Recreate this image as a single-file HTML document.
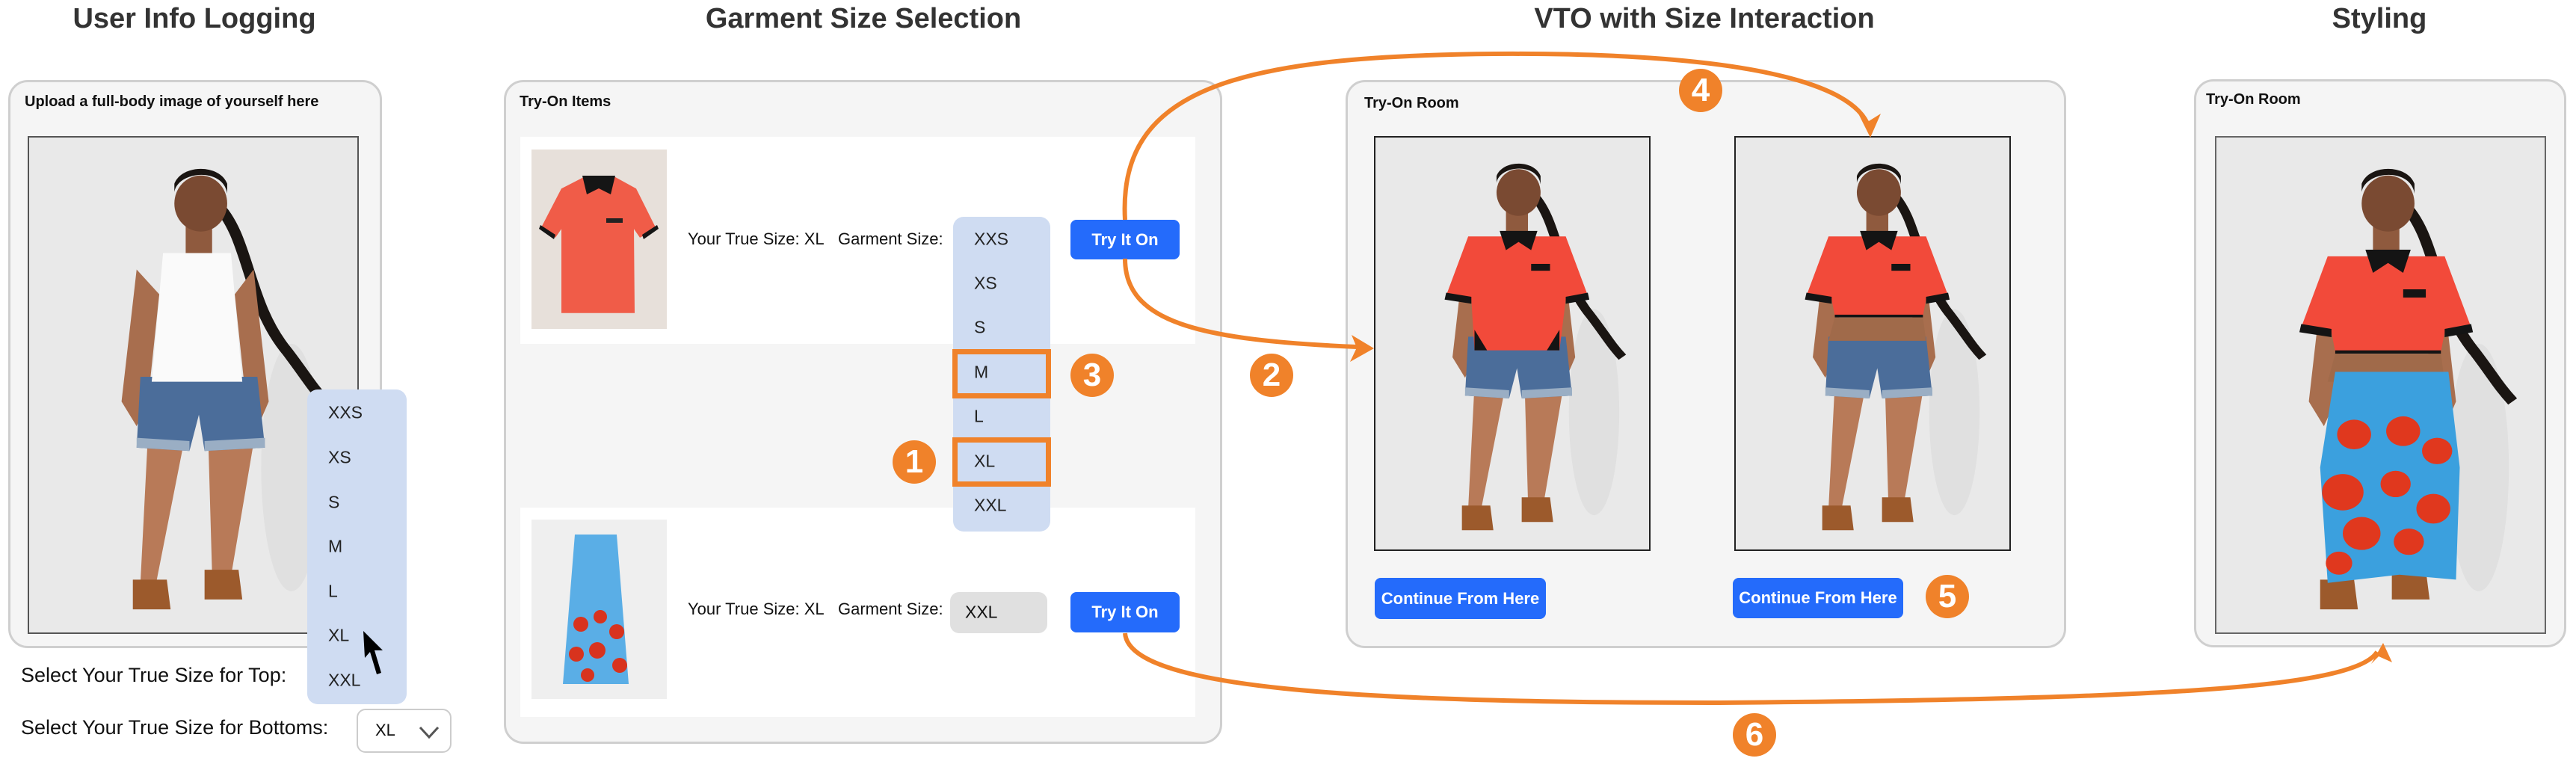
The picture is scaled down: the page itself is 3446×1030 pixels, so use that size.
<!DOCTYPE html>
<html><head><meta charset="utf-8">
<style>
*{margin:0;padding:0;box-sizing:border-box}
body{width:3446px;height:1030px;background:#fff;position:relative;overflow:hidden;font-family:"Liberation Sans",Arial,sans-serif;color:#111}
.abs{position:absolute}
.title{position:absolute;top:4px;font-size:38px;font-weight:bold;color:#333;white-space:nowrap;transform:translateX(-50%)}
.panel{position:absolute;background:#f5f5f5;border:3px solid #cfcfcf;border-radius:26px}
.ptitle{position:absolute;font-size:20px;font-weight:bold;white-space:nowrap}
.photo{position:absolute;background:#e9e9e9;border:2px solid #222;overflow:hidden}
.photo svg{width:100%;height:100%;display:block}
.dd{position:absolute;background:#cfdcf2;border-radius:14px}
.dd div{position:absolute;left:28px;font-size:23px;color:#222;transform:translateY(-50%)}
.btn{position:absolute;background:#246bfb;color:#fff;font-weight:bold;border-radius:8px;display:flex;align-items:center;justify-content:center;font-size:22px;white-space:nowrap}
.badge{position:absolute;width:58px;height:58px;border-radius:50%;background:#f0822a;color:#fff;font-weight:bold;font-size:44px;display:flex;align-items:center;justify-content:center;transform:translate(-50%,-50%)}
.lbl{position:absolute;font-size:27px;white-space:nowrap}
.row{position:absolute;background:#fff}
.txt{position:absolute;font-size:22px;white-space:nowrap;transform:translateY(-50%)}
.obox{position:absolute;border:7px solid #f0822a}
</style></head><body>
<svg width="0" height="0" style="position:absolute">
<defs>
<g id="base">
 <ellipse cx="152" cy="200" rx="16" ry="75" fill="#e0e0e0"/>
 <path d="M112 40 C130 60 128 100 150 130 C160 145 162 150 170 160" stroke="#1a1512" stroke-width="6" fill="none"/>
 <path d="M70 80 L62 160 L70 175 L76 160 L82 95 Z M132 80 L140 160 L134 176 L128 160 L122 95 Z" fill="#a86e4e"/>
 <path d="M76 180 L72 270 L80 272 L95 185 Z M108 185 L110 265 L120 266 L132 185 Z" fill="#b87a58"/>
 <rect x="96" y="52" width="14" height="22" fill="#8f5a3e"/>
 <ellipse cx="104" cy="40" rx="14" ry="17" fill="#7a4a32"/>
 <path d="M90 33 C92 20 116 18 118 34 L118 28 C114 16 94 16 90 28 Z" fill="#1a1512"/>
 <path d="M68 268 L68 286 L88 286 L86 268 Z M106 262 L106 280 L126 280 L124 262 Z" fill="#9c5a2c"/>
</g>
<g id="shorts"><path d="M72 145 L134 145 L138 188 L106 190 L103 168 L98 190 L70 188 Z" fill="#4b6d9a"/><path d="M70 182 L98 184 L98 190 L70 188 Z M106 184 L138 182 L138 188 L106 190Z" fill="#9aaec4"/></g>
<g id="polo"><path d="M72 72 L134 72 L148 115 L134 118 L130 155 L76 155 L74 118 L58 115 Z" fill="#f24a3a"/><path d="M92 68 L116 68 L112 82 L104 76 L96 82 Z" fill="#141414"/><path d="M58 113 L74 116 L74 121 L57 118Z M134 116 L148 113 L149 118 L134 121Z" fill="#141414"/><rect x="112" y="92" width="12" height="5" fill="#141414"/><path d="M76 140 L84 155 L76 155Z M130 140 L122 155 L130 155Z" fill="#141414"/></g>
<g id="crop"><path d="M72 72 L134 72 L148 115 L134 118 L132 130 L76 130 L74 118 L58 115 Z" fill="#f24a3a"/><path d="M92 68 L116 68 L112 82 L104 76 L96 82 Z" fill="#141414"/><path d="M58 113 L74 116 L74 121 L57 118Z M134 116 L148 113 L149 118 L134 121Z" fill="#141414"/><rect x="112" y="92" width="12" height="5" fill="#141414"/><rect x="76" y="129" width="56" height="2" fill="#141414"/><path d="M76 131 L132 131 L134 148 L72 148Z" fill="#a06a4a"/></g>
<g id="tank"><path d="M84 70 L120 70 L126 148 L78 148 Z" fill="#fafafa"/></g>
<g id="skirt"><path d="M76 142 L136 142 L142 200 L140 268 L110 265 L72 270 L68 200 Z" fill="#3ba0de"/>
<g fill="#e0381e"><circle cx="86" cy="180" r="9"/><circle cx="112" cy="178" r="9"/><circle cx="130" cy="190" r="8"/><circle cx="80" cy="215" r="11"/><circle cx="108" cy="210" r="8"/><circle cx="128" cy="225" r="9"/><circle cx="90" cy="240" r="10"/><circle cx="115" cy="245" r="8"/><circle cx="78" cy="258" r="7"/></g></g>
</defs></svg>

<div class="title" style="left:260px">User Info Logging</div>
<div class="title" style="left:1155px">Garment Size Selection</div>
<div class="title" style="left:2280px">VTO with Size Interaction</div>
<div class="title" style="left:3183px">Styling</div>

<!-- Panel 1 -->
<div class="panel" style="left:11px;top:107px;width:500px;height:760px"></div>
<div class="ptitle" style="left:33px;top:125px">Upload a full-body image of yourself here</div>
<div class="photo" style="left:37px;top:182px;width:443px;height:666px;border-color:#555"><svg viewBox="0 0 200 300" preserveAspectRatio="none"><g transform="translate(-15,0) scale(1.15,1)"><use href="#base"/><use href="#shorts"/><use href="#tank"/></g></svg></div>
<div class="dd" style="left:411px;top:521px;width:133px;height:421px">
 <div style="top:31px">XXS</div><div style="top:91px">XS</div><div style="top:151px">S</div><div style="top:210px">M</div><div style="top:270px">L</div><div style="top:329px">XL</div><div style="top:389px">XXL</div>
</div>
<svg class="abs" style="left:482px;top:842px" width="40" height="64" viewBox="0 0 40 64"><path d="M4 2 L6 38 L13 30 L22 60 L28 58 L19 28 L30 28 Z" fill="#000"/></svg>
<div class="lbl" style="left:28px;top:888px">Select Your True Size for Top:</div>
<div class="lbl" style="left:28px;top:958px">Select Your True Size for Bottoms:</div>
<div class="abs" style="left:477px;top:948px;width:127px;height:59px;border:2px solid #ccc;border-radius:12px;background:#fff"></div>
<div class="abs" style="left:502px;top:964px;font-size:22px">XL</div>
<svg class="abs" style="left:560px;top:970px" width="28" height="20"><path d="M2 3 L14 16 L26 3" stroke="#555" stroke-width="3" fill="none"/></svg>

<!-- Panel 2 -->
<div class="panel" style="left:674px;top:107px;width:961px;height:888px"></div>
<div class="ptitle" style="left:695px;top:125px">Try-On Items</div>
<div class="row" style="left:696px;top:183px;width:903px;height:277px"></div>
<div class="abs" style="left:711px;top:200px;width:181px;height:240px;background:#e7e0da"><svg width="181" height="240" viewBox="0 0 181 240"><path d="M70 38 L112 38 L140 55 L167 115 L145 128 L137 115 L138 240 L40 240 L40 115 L32 128 L12 115 L40 55 Z" transform="scale(1,0.9) translate(0,3)" fill="#f05c48"/><path d="M68 35 L112 35 L106 60 L90 52 L74 60 Z" fill="#151515"/><rect x="100" y="92" width="22" height="6" fill="#222"/><path d="M12 101 L32 114 L30 120 L10 106Z M168 101 L148 114 L150 120 L170 106Z" fill="#151515"/></svg></div>
<div class="txt" style="left:920px;top:320px">Your True Size: XL&nbsp;&nbsp; Garment Size:</div>
<div class="row" style="left:696px;top:679px;width:903px;height:280px"></div>
<div class="abs" style="left:711px;top:695px;width:181px;height:240px;background:#efefef"><svg width="181" height="240" viewBox="0 0 181 240"><path d="M58 20 L114 20 L130 220 L42 220 Z" fill="#5aaee6"/><g fill="#d8331e"><circle cx="66" cy="140" r="10"/><circle cx="92" cy="130" r="9"/><circle cx="114" cy="150" r="10"/><circle cx="60" cy="180" r="10"/><circle cx="88" cy="175" r="11"/><circle cx="118" cy="195" r="10"/><circle cx="75" cy="208" r="9"/></g></svg></div>
<div class="txt" style="left:920px;top:815px">Your True Size: XL&nbsp;&nbsp; Garment Size:</div>
<div class="abs" style="left:1271px;top:792px;width:130px;height:55px;background:#e0e0e0;border-radius:12px"></div>
<div class="txt" style="left:1291px;top:819px;font-size:23px">XXL</div>
<div class="dd" style="left:1275px;top:290px;width:130px;height:421px">
 <div style="top:30px">XXS</div><div style="top:89px">XS</div><div style="top:148px">S</div><div style="top:208px">M</div><div style="top:267px">L</div><div style="top:327px">XL</div><div style="top:386px">XXL</div>
</div>
<div class="obox" style="left:1274px;top:467px;width:132px;height:66px"></div>
<div class="obox" style="left:1274px;top:585px;width:132px;height:66px"></div>
<div class="btn" style="left:1432px;top:294px;width:146px;height:53px">Try It On</div>
<div class="btn" style="left:1432px;top:792px;width:146px;height:54px">Try It On</div>

<!-- Panel 3 -->
<div class="panel" style="left:1800px;top:107px;width:964px;height:760px"></div>
<div class="ptitle" style="left:1825px;top:127px">Try-On Room</div>
<div class="photo" style="left:1838px;top:182px;width:370px;height:555px"><svg viewBox="0 0 200 300" preserveAspectRatio="none"><g transform="translate(-15,0) scale(1.15,1)"><use href="#base"/><use href="#shorts"/><use href="#polo"/></g></svg></div>
<div class="photo" style="left:2320px;top:182px;width:370px;height:555px"><svg viewBox="0 0 200 300" preserveAspectRatio="none"><g transform="translate(-15,0) scale(1.15,1)"><use href="#base"/><use href="#shorts"/><use href="#crop"/></g></svg></div>
<div class="btn" style="left:1839px;top:773px;width:229px;height:55px">Continue From Here</div>
<div class="btn" style="left:2318px;top:773px;width:228px;height:54px">Continue From Here</div>

<!-- Panel 4 -->
<div class="panel" style="left:2935px;top:106px;width:498px;height:760px"></div>
<div class="ptitle" style="left:2951px;top:122px">Try-On Room</div>
<div class="photo" style="left:2963px;top:182px;width:443px;height:666px;border-color:#666"><svg viewBox="0 0 200 300" preserveAspectRatio="none"><g transform="translate(-15,0) scale(1.15,1)"><use href="#base"/><use href="#crop"/><use href="#skirt"/></g></svg></div>

<!-- arrows -->
<svg class="abs" style="left:0;top:0" width="3446" height="1030">
<g stroke="#f0822a" stroke-width="6" fill="none">
<path d="M1505 346 C1505 430 1600 455 1815 464"/>
<path d="M1505 294 C1495 120 1650 75 2000 72 C2330 70 2480 110 2500 170"/>
<path d="M1505 847 C1510 920 1800 940 2300 940 C2900 935 3150 920 3180 872"/>
</g>
<g fill="#f0822a">
<path d="M1838 466 L1808 448 L1815 465 L1806 484 Z"/>
<path d="M2502 184 L2486 152 L2500 162 L2516 152 Z"/>
<path d="M3188 860 L3172 888 L3182 878 L3200 886 Z"/>
</g>
</svg>
<div class="badge" style="left:1461px;top:502px">3</div>
<div class="badge" style="left:1223px;top:618px">1</div>
<div class="badge" style="left:1701px;top:502px">2</div>
<div class="badge" style="left:2275px;top:121px">4</div>
<div class="badge" style="left:2605px;top:798px">5</div>
<div class="badge" style="left:2347px;top:983px">6</div>
</body></html>
